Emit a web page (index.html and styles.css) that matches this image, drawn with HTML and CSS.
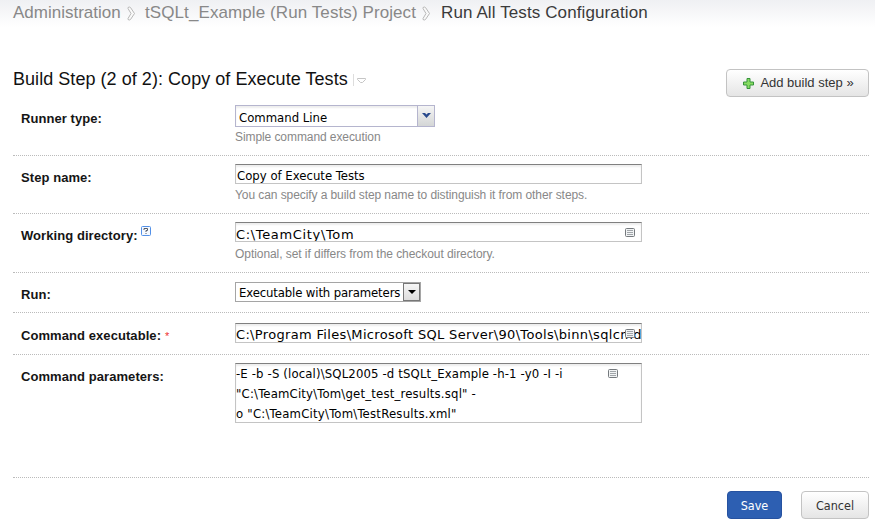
FILE: index.html
```html
<!DOCTYPE html>
<html lang="en">
<head>
<meta charset="utf-8">
<title>Run All Tests Configuration</title>
<link rel="stylesheet" href="styles.css">
</head>
<body>
<svg class="defs" width="0" height="0">
  <symbol id="chevron" viewBox="0 0 9 15"><path d="M1 1.500Q2.500 .5 3.500 1.500L7.500 7.500 3.500 13.500Q2.500 14.500 1 13.500V12.500L4 7.500 1 2.500Z" fill="#f9f9f9" stroke="#b8b8b8"/></symbol>
  <symbol id="list" viewBox="0 0 10 9"><rect x=".5" y=".5" width="9" height="8" rx="1" fill="#f1f3f4" stroke="#74797d"/><path d="M2 2.5h6M2 4.5h6M2 6.5h6" stroke="#a0a5a9"/></symbol>
</svg>
<nav class="crumbs">
  <span class="c1">Administration</span><svg class="chev"><use href="#chevron"/></svg>
  <span class="c2">tSQLt_Example (Run Tests) Project</span><svg class="chev"><use href="#chevron"/></svg>
  <span class="current">Run All Tests Configuration</span>
</nav>
<main>
  <header class="heading">
    <h2><span>Build Step (2 of 2): Copy of Execute Tests</span><svg class="drop" width="14" height="12" viewBox="0 0 14 12"><path d="M.5 0v12" stroke="#ddd"/><path d="M4.5 4.5h8v1l-3 3h-2l-3-3z" fill="#fff" stroke="#c5c5c5"/></svg></h2>
    <button class="btn add"><svg width="11" height="11" viewBox="0 0 11 11"><path d="M4 .5h3V4h3.500v3H7v3.500H4V7H.5V4H4z" fill="#88dc62" stroke="#35933b"/></svg><span>Add build step »</span></button>
  </header>
  <section class="row r1">
    <label><span class="l1">Runner type:</span></label>
    <div class="field"><div class="combo"><span class="t1">Command Line</span><i><svg width="9" height="6" viewBox="0 0 9 6"><path d="M0 0h3l1.500 1.500L6 0h3L4.500 5z" fill="#29498c"/></svg></i></div><p class="h1">Simple command execution</p></div>
  </section>
  <section class="row r2">
    <label><span class="l2">Step name:</span></label>
    <div class="field"><div class="input step"><span class="t2">Copy of Execute Tests</span></div><p class="h2">You can specify a build step name to distinguish it from other steps.</p></div>
  </section>
  <section class="row r3">
    <label><span class="l3">Working directory:</span><svg class="help" width="10" height="10" viewBox="0 0 10 10"><rect x=".5" y=".5" width="9" height="9" rx="1" fill="#f5f9ff" stroke="#5290e8"/><path d="M3 4V2.500H6.500V4.500H5V6M4.500 7.500h1" fill="none" stroke="#555b66"/></svg></label>
    <div class="field"><div class="input verdana"><span class="t3">C:\TeamCity\Tom</span><svg class="list"><use href="#list"/></svg></div><p class="h3">Optional, set if differs from the checkout directory.</p></div>
  </section>
  <section class="row r4">
    <label><span class="l4">Run:</span></label>
    <div class="field"><div class="select"><span class="t4">Executable with parameters</span><i><svg width="8" height="4" viewBox="0 0 8 4"><path d="M0 0h8L4 4z"/></svg></i></div></div>
  </section>
  <section class="row r5">
    <label><span class="l5">Command executable:</span><b class="star">*</b></label>
    <div class="field"><div class="input verdana"><span class="t5">C:\Program Files\Microsoft SQL Server\90\Tools\binn\sqlcmd</span><svg class="list"><use href="#list"/></svg></div></div>
  </section>
  <section class="row r6">
    <label><span class="l6">Command parameters:</span></label>
    <div class="field"><div class="input area"><div><span class="t6">-E -b -S (local)\SQL2005 -d tSQLt_Example -h-1 -y0 -I -i</span></div><div><span class="t7">"C:\TeamCity\Tom\get_test_results.sql" -</span></div><div><span class="t8">o "C:\TeamCity\Tom\TestResults.xml"</span></div><svg class="list"><use href="#list"/></svg></div></div>
  </section>
  <footer><button class="btn save"><span>Save</span></button><button class="btn cancel"><span>Cancel</span></button></footer>
</main>
</body>
</html>
```
FILE: styles.css
```css
* { box-sizing: border-box; }
body { margin: 0; height: 528px; overflow: hidden; background: #fff; color: #151515; font: 12px/16px "Liberation Sans", Arial, sans-serif; }
.defs { position: absolute; }
span { white-space: nowrap; }
.crumbs { display: flex; align-items: flex-start; height: 68px; padding: 2px 0 0 13px; font-size: 17px; line-height: 21px; color: #888; background: linear-gradient(#eff0f3, #fff 27px); }
.chev { width: 9px; height: 15px; margin: 4px 9px 0 6px; flex: none; }
.c1 { width: 108px; }
.c2 { width: 271px; letter-spacing: .09px; }
.current { color: #3b3b3b; letter-spacing: .11px; margin-left: 1px; }
main { padding: 0 6px 0 13px; }
.heading { display: flex; justify-content: space-between; height: 30px; }
h2 { display: flex; margin: 0; font-size: 18px; line-height: 22px; font-weight: 400; color: #111; letter-spacing: .045px; }
.drop { margin: 6px 0 0 5px; }
.btn { display: flex; align-items: center; justify-content: center; height: 28px; padding: 0; border: 1px solid #c3c3c3; border-radius: 4px; background: linear-gradient(#fff, #e5e5e5); color: #333; font: 13px/16px "Liberation Sans", Arial, sans-serif; }
.add { width: 143px; margin-top: 1px; gap: 6px; padding-left: 2px; }
.row { display: flex; border-bottom: 1px dotted #bbb; padding-left: 8px; }
.row label { width: 214px; flex: none; font-size: 13px; font-weight: 700; line-height: 16px; padding-top: 6px; letter-spacing: .07px; }
.field { width: 407px; }
.field p { margin: 0; line-height: 15px; padding-top: 4px; color: #888; white-space: nowrap; letter-spacing: -.08px; }
.r1 { height: 58px; padding-top: 7px; }
.field .h1 { padding-top: 3px; }
.field .h3 { padding-top: 5px; letter-spacing: -.06px; }
.r2 { height: 58px; padding-top: 8px; }
.r3 { height: 59px; padding-top: 8px; }
.r4 { height: 40px; padding-top: 9px; }
.r5 { height: 42px; padding-top: 10px; }
.r6 { height: 123px; padding-top: 8px; }
.r5 label, .r4 label { padding-top: 5px; }
.help { margin: -11px 0 0 3px; vertical-align: middle; }
.star { color: #e33; font-size: 11px; font-weight: 400; margin-left: 4px; }
.input, .combo, .select { position: relative; color: #000; font: 13px/18px "DejaVu Sans Condensed", "DejaVu Sans", sans-serif; }
.input { height: 20px; border: 1px solid #c4c4c4; border-top-color: #808080; padding: 2px 0 0 1px; box-shadow: inset 0 2px 2px #eee; overflow: hidden; }
.step { padding-left: 1px; }
.input.verdana { font-family: "DejaVu Sans", sans-serif; font-size: 13px; padding-left: 0; }
.r3 .input.verdana { line-height: 20px; }
.t3 { letter-spacing: .66px; }
.t4 { letter-spacing: -.13px; }
.t5 { letter-spacing: .33px; }
.t6 { letter-spacing: .14px; }
.t7 { letter-spacing: .18px; }
.t8 { letter-spacing: .22px; }
.input.area { height: 60px; line-height: 20px; padding: 0; }
.list { position: absolute; width: 10px; height: 9px; right: 6px; top: 5px; }
.area .list { right: 23px; }
.combo { display: flex; justify-content: space-between; width: 200px; height: 22px; border: 1px solid #b5b5ce; padding-left: 3px; line-height: 24px; box-shadow: inset 0 2px 2px #eee; }
.combo i { width: 17px; height: 20px; background: linear-gradient(#f5f5f5, #d4d6d6); border-left: 1px solid #b5b5ce; display: flex; justify-content: center; padding-top: 7px; }
.select { display: flex; justify-content: space-between; width: 186px; height: 20px; border: 1px solid #a5a5a5; padding-left: 3px; line-height: 20px; }
.select i { display: flex; align-items: center; justify-content: center; width: 17px; height: 18px; border: 1px solid #777; background: linear-gradient(#f6f6f6, #ddd); }
footer { display: flex; justify-content: flex-end; gap: 19px; padding-top: 13px; }
.save, .cancel { font: 12.500px/16px "DejaVu Sans Condensed", sans-serif; padding-top: 1px; }
.save { width: 55px; color: #fff; background: #2d5fb2; border-color: #2652a0; }
.cancel { width: 68px; }
```
